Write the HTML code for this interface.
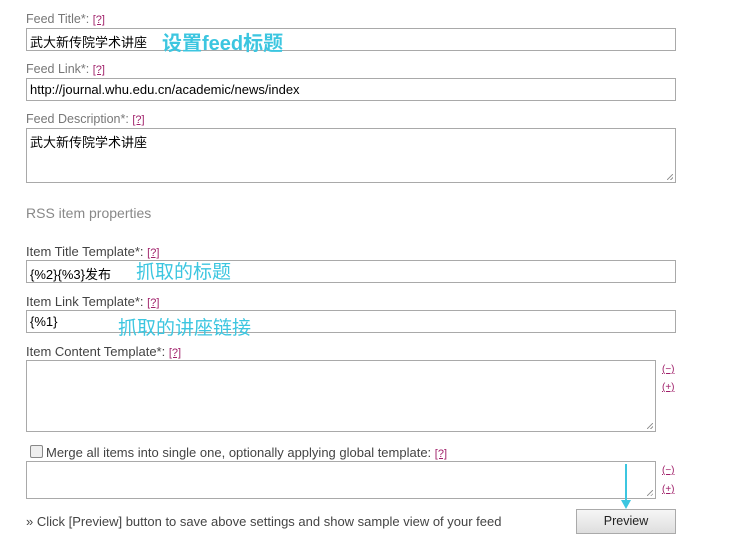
<!DOCTYPE html>
<html><head><meta charset="utf-8"><style>
body{margin:0;width:739px;height:553px;background:#fff;font-family:"Liberation Sans","Noto Sans CJK SC",sans-serif;position:relative;overflow:hidden}
.a{position:absolute}
.l{font-size:12.5px;color:#777;white-space:nowrap}
.l.d{color:#444;font-size:13px}
.h{color:#a0206a;text-decoration:underline;font-size:11px}
.b{position:absolute;border:1px solid #a9a9a9;box-sizing:border-box;background:#fff;font-size:13px;color:#000;padding:3px 3px;white-space:nowrap}
.c{color:#3cc6e0;font-size:19px;white-space:nowrap}
.r{position:absolute;right:2px;bottom:2px;width:6px;height:6px;background:linear-gradient(135deg,transparent 45%,#999 45%,#999 55%,transparent 55%,transparent 75%,#999 75%,#999 85%,transparent 85%)}
.pm{font-size:10px;color:#a0206a;text-decoration:underline}
</style></head><body>
<div class="a l" style="left:26px;top:12px">Feed Title*: <span class="h">[?]</span></div>
<div class="b" style="left:26px;top:28px;width:650px;height:23px">武大新传院学术讲座</div>
<div class="a c" style="left:162px;top:27px;font-weight:bold;font-size:20px">设置feed标题</div>
<div class="a l" style="left:26px;top:62px">Feed Link*: <span class="h">[?]</span></div>
<div class="b" style="left:26px;top:78px;width:650px;height:23px">http://journal.whu.edu.cn/academic/news/index</div>
<div class="a l" style="left:26px;top:112px">Feed Description*: <span class="h">[?]</span></div>
<div class="b" style="left:26px;top:128px;width:650px;height:55px">武大新传院学术讲座<div class="r"></div></div>
<div class="a" style="left:26px;top:205px;font-size:14px;color:#888">RSS item properties</div>
<div class="a l d" style="left:26px;top:244px">Item Title Template*: <span class="h">[?]</span></div>
<div class="b" style="left:26px;top:260px;width:650px;height:23px">{%2}{%3}发布</div>
<div class="a c" style="left:136px;top:257px">抓取的标题</div>
<div class="a l d" style="left:26px;top:294px">Item Link Template*: <span class="h">[?]</span></div>
<div class="b" style="left:26px;top:310px;width:650px;height:23px">{%1}</div>
<div class="a c" style="left:118px;top:313px">抓取的讲座链接</div>
<div class="a l d" style="left:26px;top:344px">Item Content Template*: <span class="h">[?]</span></div>
<div class="b" style="left:26px;top:360px;width:630px;height:72px"><div class="r"></div></div>
<div class="a pm" style="left:662px;top:364px">(−)</div>
<div class="a pm" style="left:662px;top:382px">(+)</div>
<div class="a" style="left:30px;top:445px;width:11px;height:11px;border:1px solid #888;border-radius:2px;background:#eee"></div>
<div class="a l d" style="left:46px;top:445px">Merge all items into single one, optionally applying global template: <span class="h">[?]</span></div>
<div class="b" style="left:26px;top:461px;width:630px;height:38px"><div class="r"></div></div>
<div class="a pm" style="left:662px;top:465px">(−)</div>
<div class="a pm" style="left:662px;top:484px">(+)</div>
<div class="a" style="left:625px;top:464px;width:2px;height:40px;background:#3cc6e0"></div>
<div class="a" style="left:621px;top:500px;width:0;height:0;border-left:5px solid transparent;border-right:5px solid transparent;border-top:9px solid #3cc6e0"></div>
<div class="a l d" style="left:26px;top:514px">» Click [Preview] button to save above settings and show sample view of your feed</div>
<div class="a" style="left:576px;top:509px;width:100px;height:25px;box-sizing:border-box;border:1px solid #aaa;background:linear-gradient(#f6f6f6,#dedede);font-size:12.5px;text-align:center;line-height:23px;color:#222">Preview</div>
</body></html>
